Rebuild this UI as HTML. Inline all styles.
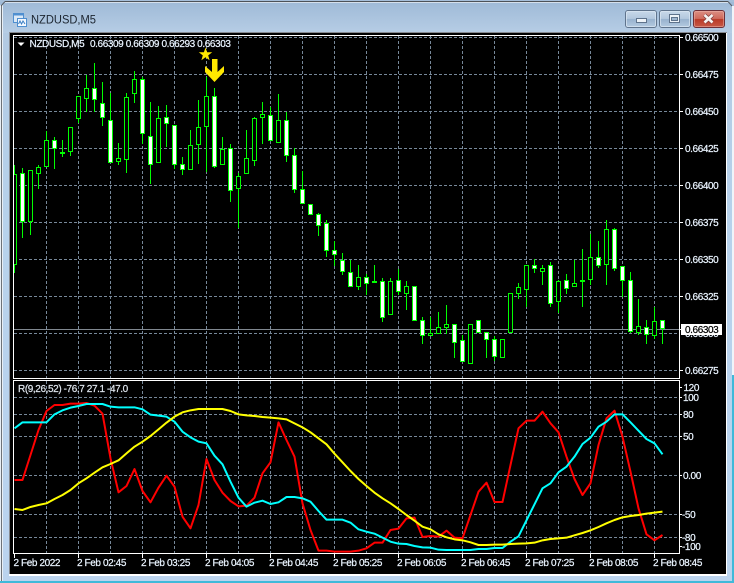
<!DOCTYPE html>
<html><head><meta charset="utf-8"><title>NZDUSD,M5</title>
<style>
html,body{margin:0;padding:0;background:#fff;width:734px;height:583px;overflow:hidden}
svg{display:block}
text{font-family:"Liberation Sans",sans-serif;font-size:10px;letter-spacing:-.4px;fill:#eaf4ff;stroke:#eaf4ff;stroke-width:.22px}
</style></head><body>
<svg width="734" height="583" viewBox="0 0 734 583" xmlns="http://www.w3.org/2000/svg">
<defs>
<linearGradient id="bg" x1="0" y1="0" x2="0" y2="1"><stop offset="0" stop-color="#a6bfda"/><stop offset=".06" stop-color="#b2cae3"/><stop offset=".4" stop-color="#b7d2ec"/><stop offset="1" stop-color="#bad3ee"/></linearGradient>
<linearGradient id="tb" x1="0" y1="0" x2="0" y2="1"><stop offset="0" stop-color="#9fbad7"/><stop offset="1" stop-color="#b6cde5"/></linearGradient>
<linearGradient id="btn" x1="0" y1="0" x2="0" y2="1"><stop offset="0" stop-color="#c9d9ea"/><stop offset=".48" stop-color="#b3c8de"/><stop offset=".52" stop-color="#98b2ce"/><stop offset="1" stop-color="#b5cbe2"/></linearGradient>
<linearGradient id="cls" x1="0" y1="0" x2="0" y2="1"><stop offset="0" stop-color="#dc9085"/><stop offset=".48" stop-color="#cf6a5c"/><stop offset=".52" stop-color="#b93a28"/><stop offset="1" stop-color="#c85a48"/></linearGradient>
<clipPath id="cm"><rect x="14" y="36" width="665" height="342"/></clipPath>
<clipPath id="cs"><rect x="14" y="381" width="665" height="172"/></clipPath>
</defs>

<rect width="734" height="583" fill="url(#bg)"/>
<rect y="2" width="734" height="31" fill="url(#tb)"/>
<path d="M5 1.5H728" stroke="#4d5258" stroke-width="1"/>
<path d="M5 2.5H728" stroke="#d5e0ec" stroke-width="1"/>
<path d="M1.5 5V583" stroke="#6d7278" stroke-width="1"/>
<path d="M2.5 5V583" stroke="#e8eff6" stroke-width="1"/>
<path d="M.5 5V583" stroke="#e8eff6" stroke-width="1"/>
<path d="M1 6L5 1.5" stroke="#5a5f66" stroke-width="1" fill="none"/>
<path d="M728 1.5L732 6" stroke="#5a5f66" stroke-width="1" fill="none"/>
<rect x="732" y="6" width="2" height="369" fill="#f0f5fa"/>
<rect x="732" y="375" width="2" height="208" fill="#3fb9d9"/>
<rect x="0" y="581" width="734" height="2" fill="#3fb9d9"/>

<!-- title icon -->
<rect x="13.5" y="13.5" width="10" height="9" fill="#dbe9f7" stroke="#4f8fd0"/>
<rect x="13.5" y="13.5" width="10" height="2" fill="#4f8fd0"/>
<rect x="17.5" y="18.5" width="9" height="8" fill="#f4f9ff" stroke="#4f8fd0"/>
<path d="M18.5 24L20 21L21.5 24L23 21L25 24" fill="none" stroke="#3c7fc4" stroke-width="1"/>
<text x="31" y="23.5" textLength="65" lengthAdjust="spacingAndGlyphs" style="font-size:12px;fill:#1c2530;stroke:none;letter-spacing:0">NZDUSD,M5</text>

<!-- buttons -->
<rect x="625.5" y="10.5" width="31" height="17" rx="2.5" fill="url(#btn)" stroke="#5f738c"/>
<rect x="626.5" y="11.5" width="29" height="15" rx="1.5" fill="none" stroke="#dce7f2" stroke-opacity=".7"/>
<rect x="636.5" y="18.5" width="10" height="4" fill="#eef3f8" stroke="#5f738c"/>
<rect x="659.5" y="10.5" width="31" height="17" rx="2.5" fill="url(#btn)" stroke="#5f738c"/>
<rect x="660.5" y="11.5" width="29" height="15" rx="1.5" fill="none" stroke="#dce7f2" stroke-opacity=".7"/>
<rect x="669.5" y="14.5" width="10" height="8" fill="#eef3f8" stroke="#5f738c"/>
<rect x="671.5" y="17.5" width="6" height="3" fill="#9fb6cf" stroke="#5f738c" stroke-width="1"/>
<rect x="693.5" y="10.5" width="31" height="17" rx="2.5" fill="url(#cls)" stroke="#6d2f38"/>
<rect x="694.5" y="11.5" width="29" height="15" rx="1.5" fill="none" stroke="#eeb5ac" stroke-opacity=".5"/>
<path d="M704.5 15L712.5 22.5M712.5 15L704.5 22.5" stroke="#7d3a3a" stroke-width="4" fill="none"/>
<path d="M704.5 15L712.5 22.5M712.5 15L704.5 22.5" stroke="#f6f3f2" stroke-width="2.6" fill="none"/>

<!-- client area -->
<rect x="9" y="32" width="718" height="544" fill="#fff"/>
<rect x="9" y="32" width="718" height="1" fill="#868a90"/>
<rect x="9" y="32" width="1" height="542" fill="#868a90"/>
<rect x="10" y="33" width="716" height="541" fill="#000"/>

<!-- grid main -->
<g fill="none" stroke="#778899" stroke-width="1" stroke-dasharray="3 2" clip-path="url(#cm)">
<path d="M14 37.5H679M14 74.5H679M14 111.5H679M14 148.5H679M14 185.5H679M14 222.5H679M14 259.5H679M14 296.5H679M14 333.5H679M14 370.5H679"/>
<path d="M46.5 36V378M78.5 36V378M110.5 36V378M142.5 36V378M174.5 36V378M206.5 36V378M238.5 36V378M270.5 36V378M302.5 36V378M334.5 36V378M366.5 36V378M398.5 36V378M430.5 36V378M462.5 36V378M494.5 36V378M526.5 36V378M558.5 36V378M590.5 36V378M622.5 36V378M654.5 36V378"/>
</g>
<path d="M14 329.5H679" stroke="#808890" stroke-width="1"/>

<!-- candles -->
<g clip-path="url(#cm)" stroke="#00ff00" stroke-width="1">
<path fill="none" d="M14.5 165V273M22.5 168V238M30.5 170V235M38.5 165V189M46.5 131V167M54.5 137V169M62.5 140V157M70.5 127V156M78.5 96V123M86.5 75V112M94.5 63V112M102.5 82V126M110.5 93V163M118.5 143V165M126.5 93V173M134.5 71V103M142.5 77V144M150.5 102V184M158.5 106V163M166.5 105V147M174.5 125V169M182.5 157V175M190.5 130V170M198.5 100V164M206.5 77V172M214.5 88V168M222.5 137V165M230.5 144V202M238.5 173V228M246.5 130V174M254.5 117V166M262.5 102V144M270.5 107V141M278.5 94V143M286.5 112V162M294.5 148V193M302.5 171V204M318.5 213V236M326.5 220V257M334.5 241V266M342.5 253V275M350.5 260V287M358.5 265V290M366.5 274V295M374.5 265V283M382.5 278V322M390.5 278V315M398.5 269V295M406.5 281V310M422.5 317V344M430.5 317V336M438.5 312V334M446.5 305V334M454.5 324V358M462.5 335V362M486.5 332V358M494.5 336V361M518.5 283V299M526.5 265V307M534.5 259V273M542.5 265V285M550.5 262V307M558.5 280V313M566.5 274V294M574.5 260V287M582.5 249V307M590.5 234V285M598.5 241V268M606.5 220V285M614.5 228V271M622.5 266V297M630.5 272V333M638.5 299V335M646.5 320V344M654.5 307V339M662.5 320V344"/>
<!-- hollow bodies -->
<path fill="#000" d="M12.5 174.5h4V264.5h-4zM28.5 170.5h4V221.5h-4zM36.5 167.5h4V173.5h-4zM44.5 140.5h4V166.5h-4zM68.5 127.5h4V151.5h-4zM76.5 96.5h4V118.5h-4zM84.5 88.5h4V98.5h-4zM116.5 158.5h4V161.5h-4zM124.5 97.5h4V159.5h-4zM132.5 79.5h4V93.5h-4zM156.5 118.5h4V162.5h-4zM188.5 145.5h4V169.5h-4zM196.5 127.5h4V144.5h-4zM204.5 96.5h4V126.5h-4zM220.5 149.5h4V164.5h-4zM236.5 176.5h4V188.5h-4zM244.5 158.5h4V173.5h-4zM252.5 118.5h4V160.5h-4zM260.5 114.5h4V117.5h-4zM276.5 120.5h4V142.5h-4zM356.5 277.5h4V286.5h-4zM372.5 281.5h4V282.5h-4zM388.5 281.5h4V314.5h-4zM404.5 286.5h4V293.5h-4zM428.5 333.5h4V335.5h-4zM436.5 327.5h4V333.5h-4zM444.5 324.5h4V327.5h-4zM468.5 324.5h4V363.5h-4zM500.5 339.5h4V357.5h-4zM508.5 293.5h4V332.5h-4zM516.5 287.5h4V293.5h-4zM524.5 265.5h4V289.5h-4zM540.5 268.5h4V271.5h-4zM556.5 281.5h4V301.5h-4zM572.5 283.5h4V286.5h-4zM588.5 257.5h4V279.5h-4zM604.5 229.5h4V264.5h-4zM636.5 326.5h4V332.5h-4zM652.5 321.5h4V335.5h-4z"/>
<!-- filled bodies -->
<path fill="#fff" d="M20.5 173.5h4V221.5h-4zM52.5 140.5h4V148.5h-4zM92.5 88.5h4V99.5h-4zM100.5 103.5h4V117.5h-4zM108.5 120.5h4V162.5h-4zM140.5 79.5h4V133.5h-4zM148.5 136.5h4V164.5h-4zM164.5 117.5h4V123.5h-4zM172.5 125.5h4V164.5h-4zM180.5 164.5h4V169.5h-4zM212.5 96.5h4V166.5h-4zM228.5 148.5h4V190.5h-4zM268.5 115.5h4V140.5h-4zM284.5 120.5h4V155.5h-4zM292.5 155.5h4V189.5h-4zM300.5 189.5h4V203.5h-4zM308.5 204.5h4V214.5h-4zM316.5 214.5h4V225.5h-4zM324.5 223.5h4V250.5h-4zM332.5 250.5h4V254.5h-4zM340.5 260.5h4V271.5h-4zM348.5 272.5h4V286.5h-4zM364.5 277.5h4V283.5h-4zM380.5 281.5h4V317.5h-4zM396.5 280.5h4V291.5h-4zM412.5 286.5h4V320.5h-4zM420.5 320.5h4V335.5h-4zM452.5 324.5h4V342.5h-4zM460.5 340.5h4V361.5h-4zM476.5 320.5h4V332.5h-4zM484.5 332.5h4V339.5h-4zM492.5 339.5h4V356.5h-4zM532.5 265.5h4V268.5h-4zM548.5 265.5h4V303.5h-4zM564.5 280.5h4V288.5h-4zM596.5 257.5h4V265.5h-4zM612.5 229.5h4V268.5h-4zM620.5 266.5h4V280.5h-4zM628.5 280.5h4V331.5h-4zM644.5 327.5h4V334.5h-4zM660.5 320.5h4V328.5h-4z"/>
<path fill="none" stroke-width="2" d="M60 153H65M580 281H585"/>
</g>

<!-- frames -->
<rect x="13.5" y="35.5" width="666" height="343" fill="none" stroke="#fff"/>
<rect x="13.5" y="380.5" width="666" height="173" fill="none" stroke="#fff"/>
<path stroke="#fff" stroke-width="1" d="M680 37.5h3M680 74.5h3M680 111.5h3M680 148.5h3M680 185.5h3M680 222.5h3M680 259.5h3M680 296.5h3M680 370.5h3M14.5 554V558M78.5 554V558M142.5 554V558M206.5 554V558M270.5 554V558M334.5 554V558M398.5 554V558M462.5 554V558M526.5 554V558M590.5 554V558M654.5 554V558"/>
<path stroke="#fff" stroke-width="1" d="M680 397.5h2M680 414.5h2M680 436.5h2M680 475.5h2M680 514.5h2M680 537.5h2M680 546.5h2M680 387.5h2"/>

<!-- header -->
<polygon points="17.5,42.5 24.5,42.5 21,46" fill="#fff"/>
<text x="29.5" y="47">NZDUSD,M5</text>
<text x="90" y="47">0.66309 0.66309 0.66293 0.66303</text>

<!-- star & arrow -->
<polygon fill="#ffe800" points="205.5,47.5 207.1,52.2 212.2,52.3 208.2,55.4 209.6,60.2 205.5,57.3 201.4,60.2 202.8,55.4 198.8,52.3 203.9,52.2"/>
<path fill="#ffe800" d="M212 59H217.5V72L224 66V72L214.5 82L205 72V66L212 72Z"/>

<!-- price labels -->
<g>
<text x="685" y="41">0.66500</text>
<text x="685" y="78">0.66475</text>
<text x="685" y="115">0.66450</text>
<text x="685" y="152">0.66425</text>
<text x="685" y="189">0.66400</text>
<text x="685" y="226">0.66375</text>
<text x="685" y="263">0.66350</text>
<text x="685" y="300">0.66325</text>
<text x="685" y="337">0.66300</text>
<text x="685" y="374">0.66275</text>
</g>
<rect x="681" y="324" width="41" height="11" fill="#fff"/>
<path d="M679 329.5h3" stroke="#fff"/>
<text x="685" y="333" style="fill:#000;stroke:#000">0.66303</text>

<!-- sub grid -->
<g fill="none" stroke="#778899" stroke-width="1" stroke-dasharray="3 2" clip-path="url(#cs)">
<path d="M14 397.5H679M14 414.5H679M14 436.5H679M14 475.5H679M14 514.5H679M14 537.5H679"/>
<path d="M46.5 381V553M78.5 381V553M110.5 381V553M142.5 381V553M174.5 381V553M206.5 381V553M238.5 381V553M270.5 381V553M302.5 381V553M334.5 381V553M366.5 381V553M398.5 381V553M430.5 381V553M462.5 381V553M494.5 381V553M526.5 381V553M558.5 381V553M590.5 381V553M622.5 381V553M654.5 381V553"/>
</g>

<!-- sub lines -->
<g clip-path="url(#cs)"><g transform="translate(0 375) scale(1 .33333)" fill="none" stroke-width="2" stroke-linejoin="round">
<polyline vector-effect="non-scaling-stroke" stroke="#ff0000" points="14.5,315 22.5,315 30.5,240 38.5,165 46.5,108 54.5,90 62.5,90 70.5,86 78.5,86 86.5,84 94.5,92 102.5,116 110.5,250 118.5,352 126.5,333 134.5,282 142.5,348 150.5,382 158.5,338 166.5,302 174.5,335 182.5,425 190.5,460 198.5,390 206.5,252 214.5,315 222.5,353 230.5,378 238.5,394 246.5,392 254.5,368 262.5,295 270.5,262 278.5,142 286.5,195 294.5,245 302.5,385 310.5,465 318.5,527 326.5,527 334.5,530 342.5,530 350.5,530 358.5,527 366.5,520 374.5,503 382.5,503 390.5,465 398.5,461 406.5,430 414.5,428 422.5,486 430.5,483 438.5,485 446.5,467 454.5,488 462.5,490 470.5,420 478.5,350 486.5,323 494.5,381 502.5,381 510.5,270 518.5,160 526.5,137 534.5,137 542.5,110 550.5,145 558.5,172 566.5,245 574.5,312 582.5,360 590.5,325 598.5,210 606.5,130 614.5,107 622.5,185 630.5,290 638.5,400 646.5,478 654.5,496 662.5,480"/>
<polyline vector-effect="non-scaling-stroke" stroke="#00ffff" points="14.5,160 22.5,142 30.5,142 38.5,142 46.5,142 54.5,118 62.5,106 70.5,98 78.5,93 86.5,87 94.5,87 102.5,87 110.5,95 118.5,97 126.5,97 134.5,97 142.5,103 150.5,119 158.5,122 166.5,125 174.5,140 182.5,170 190.5,187 198.5,200 206.5,205 214.5,242 222.5,268 230.5,320 238.5,368 246.5,395 254.5,383 262.5,377 270.5,387 278.5,382 286.5,366 294.5,366 302.5,370 310.5,380 318.5,408 326.5,434 334.5,434 342.5,434 350.5,443 358.5,463 366.5,470 374.5,476 382.5,488 390.5,500 398.5,506 406.5,507 414.5,513 422.5,517 430.5,518 438.5,524 446.5,525 454.5,525 462.5,525 470.5,525 478.5,522 486.5,522 494.5,519 502.5,519 510.5,500 518.5,484 526.5,436 534.5,388 542.5,340 550.5,325 558.5,292 566.5,275 574.5,245 582.5,207 590.5,188 598.5,155 606.5,140 614.5,118 622.5,118 630.5,142 638.5,167 646.5,192 654.5,205 662.5,238"/>
<polyline vector-effect="non-scaling-stroke" stroke="#ffff00" points="14.5,402 22.5,405 30.5,396 38.5,390 46.5,385 54.5,372 62.5,360 70.5,345 78.5,325 86.5,310 94.5,293 102.5,277 110.5,267 118.5,256 126.5,235 134.5,215 142.5,200 150.5,183 158.5,163 166.5,143 174.5,125 182.5,112 190.5,106 198.5,102 206.5,102 214.5,102 222.5,102 230.5,108 238.5,118 246.5,121 254.5,123 262.5,126 270.5,128 278.5,130 286.5,133 294.5,145 302.5,157 310.5,172 318.5,190 326.5,208 334.5,236 342.5,262 350.5,288 358.5,312 366.5,333 374.5,353 382.5,370 390.5,385 398.5,402 406.5,420 414.5,437 422.5,455 430.5,463 438.5,478 446.5,487 454.5,493 462.5,496 470.5,502 478.5,510 486.5,510 494.5,509 502.5,509 510.5,507 518.5,506 526.5,505 534.5,503 542.5,496 550.5,492 558.5,490 566.5,488 574.5,481 582.5,474 590.5,466 598.5,456 606.5,445 614.5,435 622.5,427 630.5,423 638.5,420 646.5,416 654.5,413 662.5,410"/>
</g></g>

<!-- sub labels -->
<text x="18" y="392" style="fill:#dfe6ee;stroke:#dfe6ee">R(9,26,52) -76.7 27.1 -47.0</text>
<text x="683.5" y="391">120</text>
<text x="683" y="401">100</text>
<text x="683" y="418">80</text>
<text x="683" y="440">50</text>
<text x="683" y="479">0.00</text>
<text x="682" y="518">-50</text>
<text x="682" y="541">-80</text>
<text x="682" y="550">-100</text>

<!-- time labels -->
<text x="13.5" y="566">2 Feb 2022</text>
<text x="77" y="566">2 Feb 02:45</text>
<text x="141" y="566">2 Feb 03:25</text>
<text x="205" y="566">2 Feb 04:05</text>
<text x="269" y="566">2 Feb 04:45</text>
<text x="333" y="566">2 Feb 05:25</text>
<text x="397" y="566">2 Feb 06:05</text>
<text x="461" y="566">2 Feb 06:45</text>
<text x="525" y="566">2 Feb 07:25</text>
<text x="589" y="566">2 Feb 08:05</text>
<text x="653" y="566">2 Feb 08:45</text>
</svg>
</body></html>
